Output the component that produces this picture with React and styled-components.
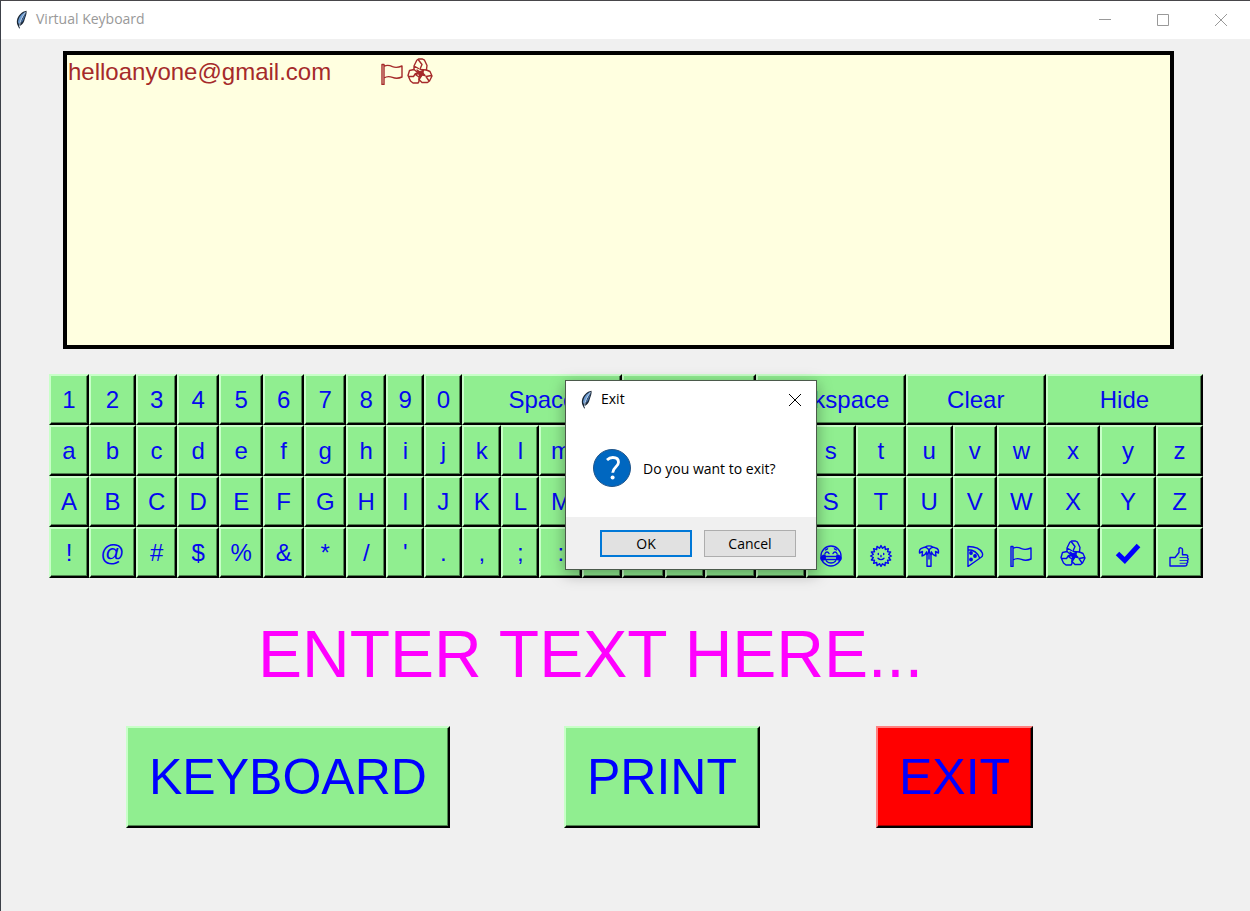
import React, { useState } from "react";
import styled, { createGlobalStyle } from "styled-components";

const GlobalStyle = createGlobalStyle`
  * { box-sizing: border-box; }
  body { margin: 0; background: #f0f0f0; }
  button, textarea { font: inherit; margin: 0; }
`;

const ui = `"Open Sans", "Noto Sans", sans-serif`;
const arial = `"Liberation Sans", Arial, sans-serif`;

const Window = styled.div`
  position: relative;
  min-height: 100vh;
  border-top: 1px solid #48464a;
  border-left: 1px solid #3c4048;
  background: #f0f0f0;
  font-family: ${arial};
`;

const TitleBar = styled.header`
  display: flex;
  align-items: center;
  height: 38px;
  padding-left: 12px;
  gap: 7px;
  background: #fff;
  font-family: ${ui};
`;

const WindowTitle = styled.h1`
  flex: 1;
  margin: 0;
  padding-bottom: 2px;
  font-size: 14px;
  line-height: 20px;
  font-weight: 400;
  color: #999;
`;

const CaptionButton = styled.button`
  display: flex;
  align-items: center;
  justify-content: center;
  width: ${(p) => p.$width}px;
  height: 38px;
  padding: 0;
  border: 0;
  background: none;
  color: ${(p) => p.$color};
`;

const Controls = styled.div`
  display: flex;
`;

const Screen = styled.div`
  display: grid;
  margin: 12px 76px 0 62px;
  height: 298px;
`;

const TextBox = styled.textarea`
  grid-area: 1 / 1;
  width: 100%;
  height: 100%;
  padding: 3px 1px;
  resize: none;
  outline: 0;
  border: 4px solid #000;
  border-radius: 0;
  background: #ffffe0;
  color: #a52a2a;
  font-family: ${arial};
  font-size: 24px;
  line-height: 28px;
`;

const Inserted = styled.div`
  grid-area: 1 / 1;
  display: flex;
  align-items: flex-start;
  padding: 6px 0 0 315px;
  color: #a52a2a;
  pointer-events: none;
`;

const columns = [40, 47, 41, 42, 44, 41, 42, 40, 38, 38, 39, 38, 43, 40, 42, 40, 51, 50, 50, 50, 47, 44, 49, 54, 56, 47];

const Keyboard = styled.div`
  display: grid;
  grid-template-columns: ${columns.map((w) => `minmax(0, ${w}fr)`).join(" ")};
  grid-auto-rows: 51px;
  margin: 25px 47px 0 48px;
`;

const raised = (p) => `
  border: 2px solid;
  border-color: ${p.$red ? "#ff8080 #000 #000 #ff8080" : "#c8ffc8 #000 #000 #c8ffc8"};
  border-radius: 0;
  box-shadow: inset -1px -1px 0 ${p.$red ? "#990000" : "#4e844e"};
  background: ${p.$red ? "#ff0000" : "#90ee90"};
  color: #0000ff;
  font-family: ${arial};
`;

const Key = styled.button`
  ${raised}
  grid-column: span ${(p) => p.$span || 1};
  display: flex;
  align-items: center;
  justify-content: center;
  padding: 0;
  overflow: hidden;
  color: #0508ee;
  font-size: 24px;
  line-height: 28px;
`;

const Prompt = styled.h2`
  margin: 38px 70px 0 0;
  text-align: center;
  font-size: 66px;
  line-height: 76px;
  font-weight: 400;
  color: #ff00ff;
`;

const Actions = styled.div`
  display: grid;
  grid-template-columns: 438fr 312fr 374fr;
  justify-items: start;
  margin-top: 34px;
  padding-left: 125px;
`;

const ActionButton = styled.button`
  ${raised}
  height: 102px;
  padding: 0 21px;
  font-size: 50px;
  line-height: 58px;
`;

const Dialog = styled.section`
  position: absolute;
  left: 564px;
  top: 379px;
  width: 252px;
  border: 1px solid #4b5a4b;
  background: #fff;
  box-shadow: 0 4px 14px rgba(0, 0, 0, 0.35);
  font-family: ${ui};
  color: #000;
`;

const DialogBar = styled.div`
  display: flex;
  align-items: center;
  height: 38px;
  padding-left: 12px;
  gap: 7px;
`;

const DialogTitle = styled.h2`
  flex: 1;
  margin: 0;
  padding-bottom: 2px;
  font-size: 14px;
  line-height: 20px;
  font-weight: 400;
`;

const DialogBody = styled.div`
  display: flex;
  align-items: center;
  gap: 12px;
  height: 98px;
  padding-left: 27px;
`;

const Message = styled.p`
  margin: 0;
  padding-top: 2px;
  font-size: 14px;
  line-height: 20px;
  white-space: nowrap;
`;

const DialogFooter = styled.div`
  display: flex;
  justify-content: flex-end;
  gap: 12px;
  padding: 13px 20px 12px;
  background: #f0f0f0;
`;

const DialogButton = styled.button`
  width: 92px;
  height: 27px;
  padding: 0;
  border: ${(p) => (p.$primary ? "2px solid #0078d7" : "1px solid #adadad")};
  background: #e1e1e1;
  color: #000;
  font-family: ${ui};
  font-size: 14px;
  line-height: 20px;
`;

const Feather = () => (
  <svg width="16" height="20" viewBox="0 0 16 20" aria-hidden="true">
    <path d="M13.500.8C9 1.500 5 5.500 4 10c-.4 2 0 4 .6 5.200L6.400 19l.8-3.300C10 14.500 11 12 11.800 9 12.800 6 14 3.500 13.500.8Z" fill="#1a2634" />
    <path d="M12.800 1.800C9 3 5.500 7 5 12l1 2.500Z" fill="#6b9bd2" />
    <path d="M12.700 2.800 7 13.800l3-2.800c1-2.400 2.400-5.600 2.700-8.200Z" fill="#426fa8" />
    <path d="M12.500 2.500C9.500 6 7 10.500 6.400 17" fill="none" stroke="#d5e3f2" strokeWidth=".8" />
  </svg>
);

const Cross = () => (
  <svg width="14" height="14" viewBox="0 0 14 14" stroke="currentColor" aria-hidden="true">
    <path d="m1 1 12 12M13 1 1 13" />
  </svg>
);

const Symbol = ({ children }) => (
  <svg width="28" height="28" viewBox="0 0 28 28" fill="none" stroke="currentColor" strokeWidth="1.400" strokeLinejoin="round" strokeLinecap="round" aria-hidden="true">
    {children}
  </svg>
);

const sunRays = Array.from({ length: 32 }, (_, i) => {
  const a = (i * Math.PI) / 16;
  const r = i % 2 ? 7.8 : 10.4;
  return `${(14 + r * Math.sin(a)).toFixed(1)},${(17 - r * Math.cos(a)).toFixed(1)}`;
}).join(" ");

const Joy = () => (
  <Symbol>
    <circle cx="14" cy="17" r="10" />
    <path d="M8 14.500c1-2 3-2 4 0M16 14.500c1-2 3-2 4 0M8.500 11l2-1.200M19.500 11l-2-1.200" />
    <path d="M8 17.500h12c0 4-2.500 6.500-6 6.500s-6-2.500-6-6.500Z" />
    <path d="M9 20.500h10" />
    <path d="M8 16c-2.500.4-4.500 2-4 4 .5 1.800 3.500 1.500 4-.5ZM20 16c2.500.4 4.500 2 4 4-.5 1.800-3.500 1.500-4-.5Z" fill="currentColor" />
  </Symbol>
);

const Sun = () => (
  <Symbol>
    <polygon points={sunRays} />
    <path d="M11.300 14.500v1M16.700 14.500v1M14 16.500v1.200M11 19.300c1.600 1.800 4.400 1.800 6 0" />
  </Symbol>
);

const Palm = () => (
  <Symbol strokeWidth="1">
    <path d="M12 27.300V15.500M16 27.300V15.500M12 27.300h4M14 12v8" />
    <path d="M14 11.500C13 8.500 10 7.500 7.500 9c-2.500.3-3.300 2.500-3 5l3-1.500L7 17c2.500-.5 4-2.200 4.700-4.200L12 15.500c1-.8 1.800-2 2-4Z" />
    <path d="M14 11.500c1-3 4-4 6.500-2.500 2.500.3 3.300 2.500 3 5l-3-1.500.5 4.500c-2.500-.5-4-2.200-4.700-4.200L16 15.500c-1-.8-1.800-2-2-4ZM10.500 8c1.500-1.500 5.500-1.500 7 0" />
  </Symbol>
);

const Pizza = () => (
  <Symbol>
    <path d="M7 7.500v20L20.500 18c1.500-1 1.200-2.600.8-4C19.500 10 14 7.500 7 7.500ZM7 10.800c5 0 9.500 3 11.500 8" />
    <g fill="currentColor">
      <circle cx="10" cy="14" r="1.200" />
      <circle cx="14" cy="17" r="1.200" />
      <circle cx="10" cy="20.500" r="1.200" />
    </g>
  </Symbol>
);

const Flag = () => (
  <Symbol>
    <path d="M4 7.500h2v20H4ZM6 9.500c3-2 6-1 8.500.2 3 1.200 6 .8 9.500-.7V20c-3.500 1.600-6.500 1.600-9.500.4-2.500-1-5.500-1.400-8.500.6" />
  </Symbol>
);

const Recycle = () => (
  <Symbol>
    <path d="m8 9 2.800-5.800L12.500 2h4l2 1.200L21 8.500l-.6 4.500-6-.5M8 9l4.500 2.500M8 9v3.500" />
    <path d="m12.500 3 3.500 4.500-2 4.500" />
    <path d="m3.500 13.500 4.500-1 3.700 3-1.700 2.500L13 20v4.500l-1 1.500H7l-2.500-2L2 18.500l1.500-5ZM3 19.500h4.500l2-3" />
    <path d="M20.400 13 24 14.500l2 4.500-2.500 5-2 1.500h-5.500L13 22.500l3-4.500 1-2M23 24l-3-4.500 5.500-1" />
    <path d="m11 13 3 2 3.500-2-.8 3 2.300 2.500-3.500-.7-1.800 2.200-.5-3-2.700-.5 1.700-1.500Z" fill="currentColor" />
  </Symbol>
);

const Check = () => (
  <Symbol>
    <path d="m3.500 14.500 7.300 7L24.500 6.500" stroke="#0000ff" strokeWidth="5" strokeLinecap="butt" strokeLinejoin="miter" />
  </Symbol>
);

const Thumb = () => (
  <Symbol>
    <path d="M5 18.500h5l4-5V10c0-1.600 3.500-1.800 3.500.8v5H21c2 0 2.300 2.200 1.200 2.800 1.400.8 1.300 2.400 0 3 1 1 .6 2.200-.4 2.700.6 1.500-.4 2.700-2 2.700H5Z" />
    <path d="M15 18.500h7M15 21.500h7M15 24.300h6.500" strokeWidth=".8" />
  </Symbol>
);

const topRow = [
  ..."1234567890".split("").map((label) => ({ label })),
  { label: "Space", span: 4 },
  { label: "Tab", span: 3 },
  { label: "Backspace", span: 3 },
  { label: "Clear", span: 3 },
  { label: "Hide", span: 3 },
];

const letters = "abcdefghijklmnopqrstuvwxyz".split("");

const symbols = [
  ..."!@#$%&*/'.,;:?+-=_".split("").map((label) => ({ label })),
  { label: "Tears of joy", icon: Joy },
  { label: "Sun", icon: Sun },
  { label: "Palm tree", icon: Palm },
  { label: "Pizza", icon: Pizza },
  { label: "Flag", icon: Flag },
  { label: "Recycle", icon: Recycle },
  { label: "Check", icon: Check },
  { label: "Thumbs up", icon: Thumb },
];

const keys = [
  ...topRow,
  ...letters.map((label) => ({ label })),
  ...letters.map((l) => ({ label: l.toUpperCase() })),
  ...symbols,
];

export default function App() {
  const [text, setText] = useState("helloanyone@gmail.com");
  return (
    <>
      <GlobalStyle />
      <Window>
        <TitleBar>
          <Feather />
          <WindowTitle>Virtual Keyboard</WindowTitle>
          <Controls>
            <CaptionButton $width={58} $color="#999" aria-label="Minimize">
              <svg width="12" height="12" viewBox="0 0 12 12" stroke="currentColor" aria-hidden="true"><path d="M0 5.500h12" /></svg>
            </CaptionButton>
            <CaptionButton $width={58} $color="#999" aria-label="Maximize">
              <svg width="12" height="12" viewBox="0 0 12 12" fill="none" stroke="currentColor" aria-hidden="true"><path d="M.5.5h11v11H.5Z" /></svg>
            </CaptionButton>
            <CaptionButton $width={58} $color="#999" aria-label="Close">
              <Cross />
            </CaptionButton>
          </Controls>
        </TitleBar>

        <main>
          <Screen>
            <TextBox aria-label="Text" spellCheck={false} value={text} onChange={(e) => setText(e.target.value)} />
            <Inserted>
              <Flag />
              <Recycle />
            </Inserted>
          </Screen>

          <Keyboard>
            {keys.map(({ label, span, icon: Icon }) => (
              <Key key={label} $span={span} aria-label={Icon ? label : undefined}>
                {Icon ? <Icon /> : label}
              </Key>
            ))}
          </Keyboard>

          <Prompt>ENTER TEXT HERE...</Prompt>

          <Actions>
            <ActionButton>KEYBOARD</ActionButton>
            <ActionButton>PRINT</ActionButton>
            <ActionButton $red>EXIT</ActionButton>
          </Actions>
        </main>

        <Dialog role="dialog" aria-labelledby="exit-title">
          <DialogBar>
            <Feather />
            <DialogTitle id="exit-title">Exit</DialogTitle>
            <CaptionButton $width={42} $color="#000" aria-label="Close dialog">
              <Cross />
            </CaptionButton>
          </DialogBar>
          <DialogBody>
            <svg width="38" height="38" viewBox="0 0 38 38" fill="none" aria-hidden="true">
              <circle cx="19" cy="19" r="18.500" fill="#0067c0" stroke="#20558a" />
              <path d="M14 11c1.500-1.500 3.400-2.500 5.800-2.500 3.500 0 5.700 1.800 5.700 4.800 0 4.600-5.800 5-5.800 10.500" stroke="#fff" strokeWidth="2.800" />
              <circle cx="19.600" cy="28.500" r="2" fill="#fff" />
            </svg>
            <Message>Do you want to exit?</Message>
          </DialogBody>
          <DialogFooter>
            <DialogButton $primary>OK</DialogButton>
            <DialogButton>Cancel</DialogButton>
          </DialogFooter>
        </Dialog>
      </Window>
    </>
  );
}
